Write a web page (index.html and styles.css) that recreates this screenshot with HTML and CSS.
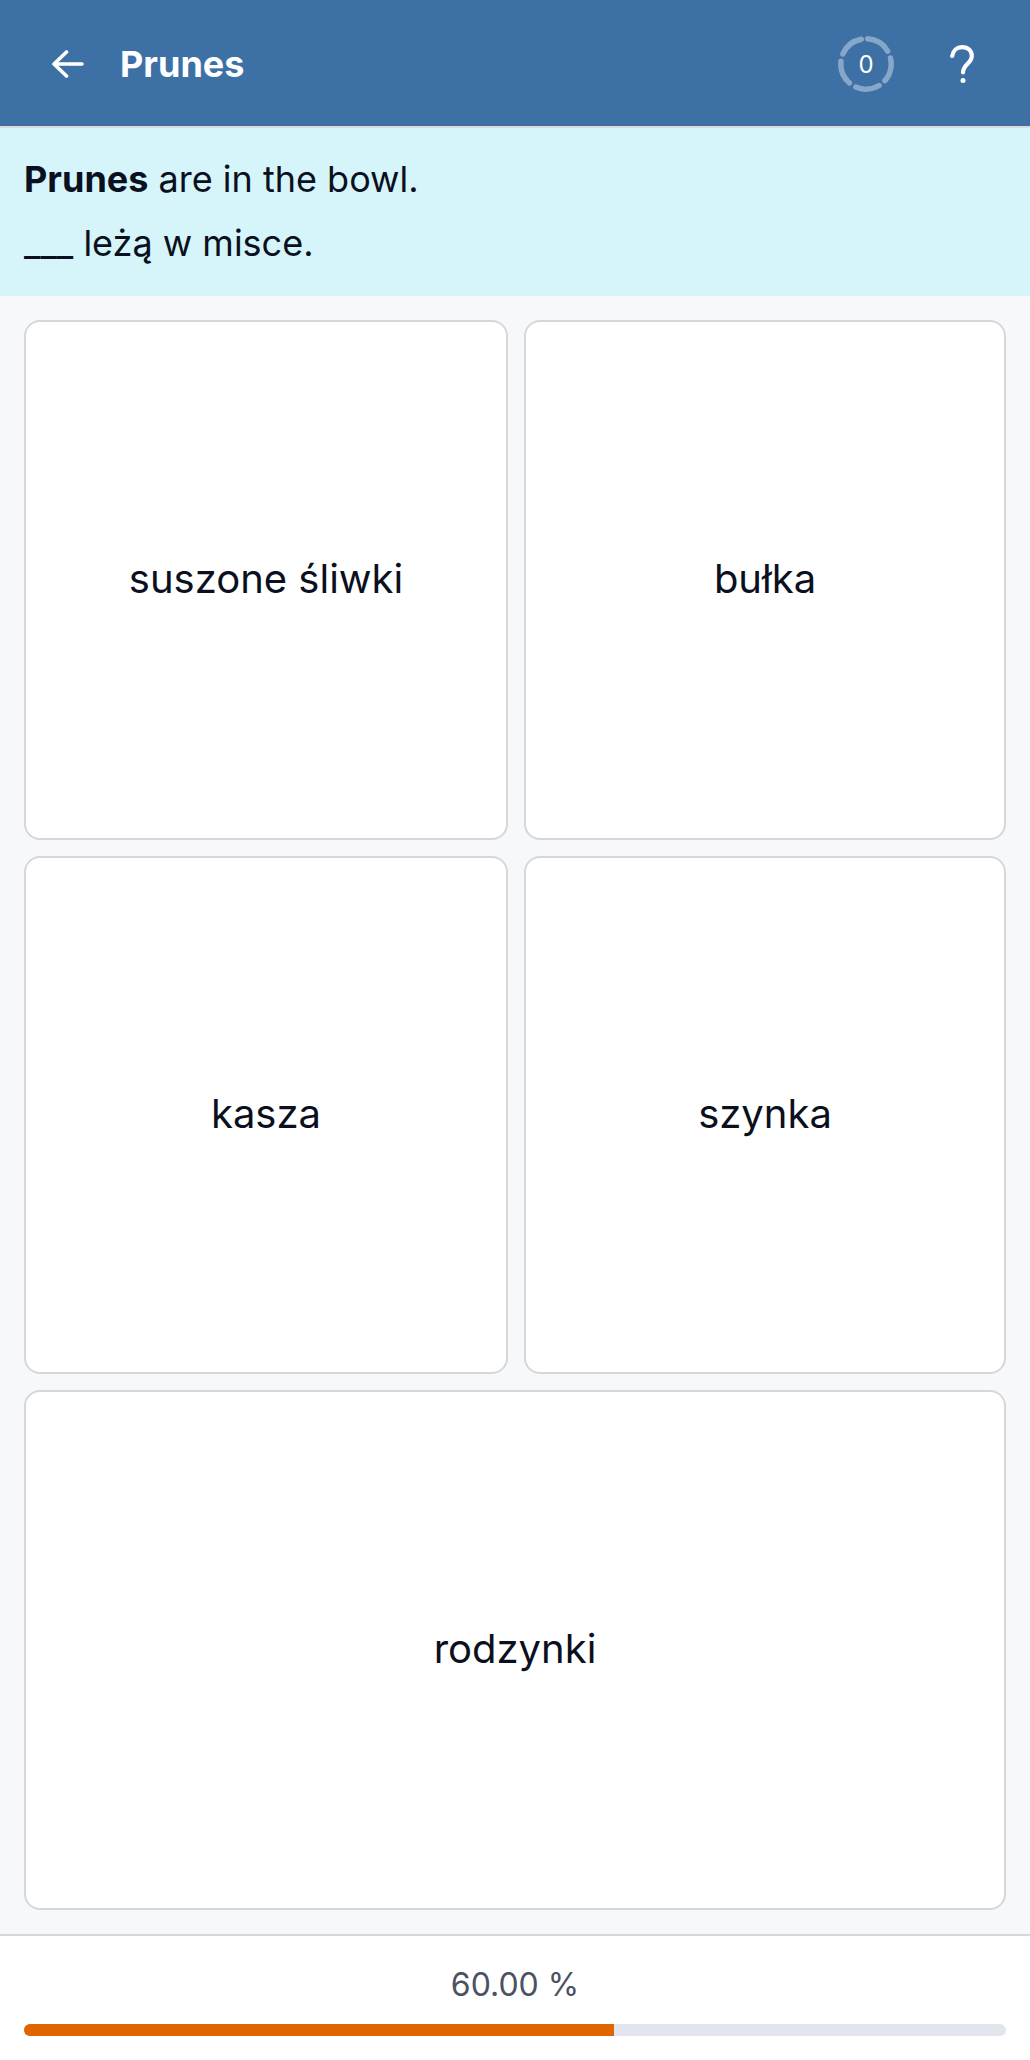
FILE: index.html
```html
<!DOCTYPE html>
<html lang="pl">
<head>
    <meta charset="UTF-8">
    <meta name="viewport" content="width=device-width, initial-scale=1.0">
    <title>Prunes</title>
    <link rel="stylesheet" href="styles.css">
</head>
<body>

    <!-- Top bar -->
    <header class="topbar">
        <svg class="back-icon" viewBox="0 0 32 28" fill="none" stroke="#fff" stroke-width="3.600" stroke-linecap="round" stroke-linejoin="round">
            <path d="M30 14H2.500M14.500 2 2 14l12.500 12"/>
        </svg>
        <h1 class="topbar-title">Prunes</h1>
        <div class="score">
            <svg class="score-ring" viewBox="0 0 56 56" fill="none" stroke="#fff" stroke-opacity=".38" stroke-width="5.500" stroke-linecap="round">
                <circle cx="28" cy="28" r="25.200" stroke-dasharray="24.200 7.470" transform="rotate(-86.400 28 28)"/>
            </svg>
            <span class="score-num">0</span>
        </div>
        <svg class="help-icon" viewBox="0 0 24 38" fill="none" stroke="#fff" stroke-width="4.200" stroke-linecap="round" stroke-linejoin="round">
            <path d="M2.200 11C3 5.500 7 2.200 12 2.200c6 0 9.800 3.600 9.800 8.800 0 7.500-8.800 8-8.800 16.500"/>
            <circle cx="13" cy="35.500" r="2.500" fill="#fff" stroke="none"/>
        </svg>
    </header>

    <!-- Sentence -->
    <section class="sentence">
        <p><b>Prunes</b> are in the bowl.</p>
        <p>___ leżą w misce.</p>
    </section>

    <!-- Answers -->
    <main class="answers">
        <button class="answer">suszone śliwki</button>
        <button class="answer">bułka</button>
        <button class="answer">kasza</button>
        <button class="answer">szynka</button>
        <button class="answer answer-wide">rodzynki</button>
    </main>

    <!-- Progress -->
    <footer class="progress">
        <div class="progress-label">60.00 %</div>
        <div class="progress-track"><div class="progress-fill" style="width: 60.1%"></div></div>
    </footer>

</body>
</html>
```

FILE: styles.css
```css
* { margin: 0; padding: 0; box-sizing: border-box; }

body {
    height: 2060px;
    display: flex;
    flex-direction: column;
    background: #f7f8fa;
    color: #0b1020;
    font-family: Inter, "Liberation Sans", sans-serif;
    overflow: hidden;
}

.topbar {
    height: 128px;
    flex: none;
    display: flex;
    align-items: center;
    padding: 2px 56px 0 52px;
    background: #3d71a6;
    border-bottom: 2px solid #d8dade;
}

.back-icon { width: 32px; height: 28px; }

.topbar-title {
    flex: 1;
    margin-left: 36px;
    font-size: 36px;
    font-weight: 700;
    color: #fff;
}

.score {
    position: relative;
    width: 56px;
    height: 56px;
    margin-right: 56px;
}

.score-ring { display: block; width: 56px; height: 56px; }

.score-num {
    position: absolute;
    inset: 0;
    display: flex;
    align-items: center;
    justify-content: center;
    font-size: 24px;
    color: #fff;
}

.help-icon { width: 24px; height: 38px; }

.sentence {
    height: 168px;
    flex: none;
    padding: 19px 24px 0;
    background: #d5f5fa;
    font-size: 36px;
    line-height: 64px;
}

.sentence b { font-weight: 700; }

.answers {
    flex: 1;
    display: grid;
    grid-template-columns: 484px 1fr;
    grid-template-rows: 520px 518px 520px;
    gap: 16px;
    padding: 24px 24px 0;
}

.answer {
    display: flex;
    align-items: center;
    justify-content: center;
    padding-bottom: 3px;
    background: #fff;
    border: 2px solid #d5d7db;
    border-radius: 16px;
    color: #0b1020;
    font-family: inherit;
    font-size: 40px;
}

.answer-wide { grid-column: span 2; }

.progress {
    height: 126px;
    flex: none;
    padding: 0 24px;
    background: #fff;
    border-top: 2px solid #d5d7db;
}

.progress-label {
    margin-top: 27px;
    height: 44px;
    line-height: 44px;
    text-align: center;
    font-size: 32px;
    color: #4b5162;
}

.progress-track {
    height: 12px;
    margin-top: 17px;
    background: #e2e5ed;
    border-radius: 6px;
    overflow: hidden;
}

.progress-fill { height: 100%; background: #e06500; }
```
